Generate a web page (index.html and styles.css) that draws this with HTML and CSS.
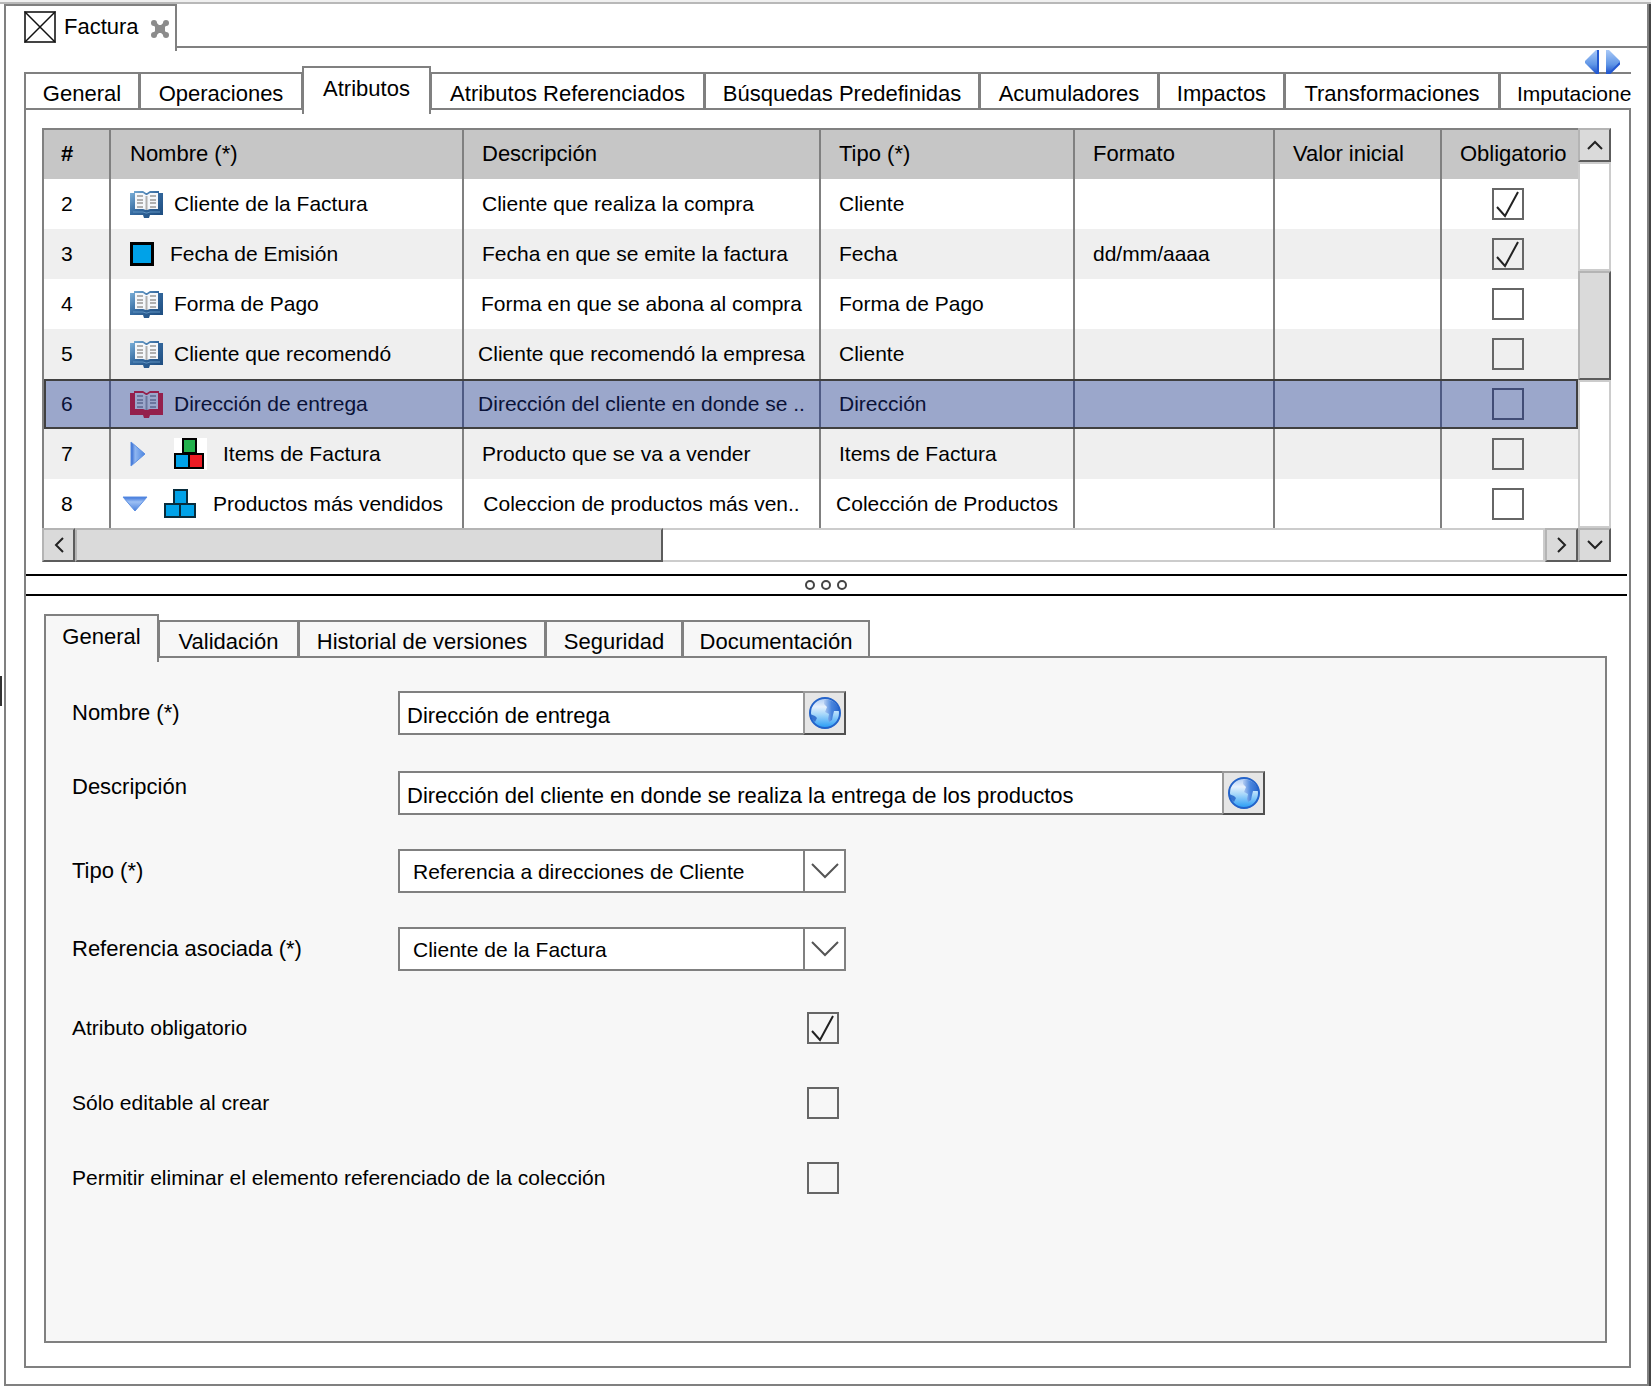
FILE: index.html
```html
<!DOCTYPE html>
<html lang="es">
<head>
<meta charset="utf-8">
<meta name="viewport" content="width=device-width, initial-scale=1">
<title>Factura</title>
<link rel="stylesheet" href="styles.css">
</head>
<body>
<svg class="defs" aria-hidden="true">
  <defs>
    <linearGradient id="g-cover" x1="0" y1="0" x2="1" y2="1">
      <stop offset="0" stop-color="#7fb4dc"/><stop offset=".45" stop-color="#34699f"/><stop offset="1" stop-color="#1c4a7c"/>
    </linearGradient>
    <linearGradient id="g-arrow" x1="0" y1="0" x2="1" y2="0">
      <stop offset="0" stop-color="#2a62cf"/><stop offset=".3" stop-color="#8fb6f0"/><stop offset="1" stop-color="#4a84e0"/>
    </linearGradient>
    <linearGradient id="g-down" x1="0" y1="0" x2="0" y2="1">
      <stop offset="0" stop-color="#3a72da"/><stop offset=".35" stop-color="#9dc0f4"/><stop offset="1" stop-color="#4a80dc"/>
    </linearGradient>
    <linearGradient id="g-nav" x1="0" y1="0" x2="0" y2="1">
      <stop offset="0" stop-color="#a9c9f7"/><stop offset=".6" stop-color="#6096e6"/><stop offset="1" stop-color="#1a4fcb"/>
    </linearGradient>
    <linearGradient id="g-sea" x1="0" y1="0" x2="1" y2="0">
      <stop offset="0" stop-color="#b4cdf2"/><stop offset=".5" stop-color="#4a86de"/><stop offset="1" stop-color="#2a68cc"/>
    </linearGradient>
    <linearGradient id="g-land" x1="0" y1="0" x2="0" y2="1">
      <stop offset="0" stop-color="#a9c8f3"/><stop offset=".3" stop-color="#e6f1fd"/><stop offset=".55" stop-color="#a4d6fa"/><stop offset="1" stop-color="#1f98f4"/>
    </linearGradient>
  </defs>
  <symbol id="book" viewBox="0 0 33 28">
    <path class="cover" d="M0 3h4V1h9l3 2h1l3-2h9v2h4v22H20l-1 3h-5l-1-3H0z"/>
    <path class="page" d="M5 3h8l3 2h1l3-2h8v16h-8l-3 1h-1l-3-1H5z"/>
    <path class="lines" d="M7 6h6M7 10h6M7 13h6M7 17h6M20 6h6M20 10h6M20 13h6M20 17h6"/>
    <path class="spine" d="M16.500 6v14"/>
    <path class="edge" d="M3 22h10l3 1h1l3-1h10"/>
  </symbol>
  <symbol id="globe" viewBox="0 0 32 32">
    <circle cx="16" cy="16" r="15.500" fill="url(#g-land)"/>
    <path d="M15 3Q24 1 30 11v3h-5l-1 4-1 5-3 2-1-3 1-5-4-2 2-5-3-3z" fill="url(#g-sea)"/>
    <path d="M1 17l5 2 2 2-2 4Q2 22 1 17z" fill="#3673cf"/>
    <circle cx="16" cy="16" r="15" fill="none" stroke="#2463c9" stroke-width="2"/>
  </symbol>
</svg>

<div class="strip"></div>
<span class="grip" aria-hidden="true"></span>
<main class="window">
  <header class="docs">
    <div class="doc">
      <svg width="32" height="32" viewBox="0 0 32 32" aria-hidden="true"><rect x="1" y="1" width="30" height="30" fill="none" stroke="#444" stroke-width="2"/><path d="M1 1l30 30M31 1L1 31" stroke="#111" stroke-width="1.500"/></svg>
      <h1>Factura</h1>
      <button class="close" aria-label="Cerrar"><svg width="18" height="18" viewBox="0 0 18 18"><path d="M3 3l12 12M15 3L3 15" stroke="#8c8c8c" stroke-width="4"/><g fill="#8c8c8c"><rect x="4" y="5" width="10" height="8"/><circle cx="3" cy="3" r="3"/><circle cx="15" cy="3" r="3"/><circle cx="3" cy="15" r="3"/><circle cx="15" cy="15" r="3"/></g></svg></button>
    </div>
    <div class="docs-line"></div>
  </header>

  <section class="content">
    <div class="nav">
      <button aria-label="Anterior"><svg width="15" height="24" viewBox="0 0 15 24"><path d="M14 0v24h-3L0 13v-2L11 0z" fill="url(#g-nav)"/><path d="M13 0v24" stroke="#2459d0" stroke-width="2"/></svg></button>
      <button aria-label="Siguiente"><svg width="15" height="24" viewBox="0 0 15 24"><path d="M1 0v24h3l11-11v-2L4 0z" fill="url(#g-nav)"/><path d="M1 24h3l11-11" fill="none" stroke="#2459d0" stroke-width="2"/></svg></button>
    </div>
    <nav class="tabs tabs-main">
      <button class="tab">General</button><button class="tab">Operaciones</button><button class="tab active">Atributos</button><button class="tab">Atributos Referenciados</button><button class="tab">Búsquedas Predefinidas</button><button class="tab">Acumuladores</button><button class="tab">Impactos</button><button class="tab">Transformaciones</button><button class="tab cut">Imputacione</button>
    </nav>

    <div class="panel">
      <div class="sheet">
        <table>
          <colgroup><col class="c-num"><col class="c-name"><col class="c-desc"><col class="c-type"><col class="c-format"><col class="c-value"><col></colgroup>
          <thead><tr><th class="num">#</th><th>Nombre (*)</th><th>Descripción</th><th>Tipo (*)</th><th>Formato</th><th>Valor inicial</th><th>Obligatorio</th></tr></thead>
          <tbody>
            <tr><td>2</td><td><div class="name"><svg class="book" width="33" height="28"><use href="#book"/></svg>Cliente de la Factura</div></td><td>Cliente que realiza la compra</td><td>Cliente</td><td></td><td></td><td class="tick"><input type="checkbox" checked aria-label="Obligatorio 2"></td></tr>
            <tr><td>3</td><td><div class="name wide"><svg width="24" height="24" viewBox="0 0 24 24"><rect x="1.500" y="1.500" width="21" height="21" fill="#00a2e8" stroke="#000" stroke-width="3"/></svg>Fecha de Emisión</div></td><td>Fecha en que se emite la factura</td><td>Fecha</td><td>dd/mm/aaaa</td><td></td><td class="tick"><input type="checkbox" checked aria-label="Obligatorio 3"></td></tr>
            <tr><td>4</td><td><div class="name"><svg class="book" width="33" height="28"><use href="#book"/></svg>Forma de Pago</div></td><td class="full">Forma en que se abona al compra</td><td>Forma de Pago</td><td></td><td></td><td class="tick"><input type="checkbox" aria-label="Obligatorio 4"></td></tr>
            <tr><td>5</td><td><div class="name"><svg class="book" width="33" height="28"><use href="#book"/></svg>Cliente que recomendó</div></td><td class="full">Cliente que recomendó la empresa</td><td>Cliente</td><td></td><td></td><td class="tick"><input type="checkbox" aria-label="Obligatorio 5"></td></tr>
            <tr class="selected"><td>6</td><td><div class="name"><svg class="book" width="33" height="28"><use href="#book"/></svg>Dirección de entrega</div></td><td class="full">Dirección del cliente en donde se ..</td><td>Dirección</td><td></td><td></td><td class="tick"><input type="checkbox" aria-label="Obligatorio 6"></td></tr>
            <tr><td>7</td><td><div class="name"><svg class="twist" width="16" height="26" viewBox="0 0 16 26"><path d="M1 1l14 12L1 25z" fill="url(#g-arrow)" stroke="#5c8fe2"/></svg><svg width="33" height="32" viewBox="0 0 33 32"><rect width="33" height="32" fill="#fff"/><g stroke="#000" stroke-width="2"><rect x="9" y="1" width="13" height="14" fill="#22b14c"/><rect x="1" y="16" width="14" height="14" fill="#00a2e8"/><rect x="15" y="16" width="14" height="14" fill="#ed1c24"/></g></svg><span class="leaf">Items de Factura</span></div></td><td>Producto que se va a vender</td><td>Items de Factura</td><td></td><td></td><td class="tick"><input type="checkbox" aria-label="Obligatorio 7"></td></tr>
            <tr><td>8</td><td class="open"><div class="name wide"><svg width="26" height="16" viewBox="0 0 26 16"><path d="M1 1h24L13 15z" fill="url(#g-down)" stroke="#5c8fe2"/></svg><svg width="33" height="30" viewBox="0 0 33 30"><g fill="#00a2e8" stroke="#082c3c" stroke-width="2"><rect x="10" y="1" width="13" height="14"/><rect x="1" y="15" width="15" height="13"/><rect x="16" y="15" width="15" height="13"/></g></svg>Productos más vendidos</div></td><td class="full">Coleccion de productos más ven..</td><td class="full">Colección de Productos</td><td></td><td></td><td class="tick"><input type="checkbox" aria-label="Obligatorio 8"></td></tr>
          </tbody>
        </table>
        <div class="bar vbar">
          <button aria-label="Subir"><svg width="16" height="10" viewBox="0 0 16 10"><path d="M1 9l7-7 7 7"/></svg></button>
          <i class="track before"></i><i class="thumb"></i><i class="track after"></i>
        </div>
        <div class="bar hbar">
          <button aria-label="Izquierda"><svg width="10" height="16" viewBox="0 0 10 16"><path d="M9 1L2 8l7 7"/></svg></button>
          <i class="thumb"></i><i class="track"></i>
          <button aria-label="Derecha"><svg width="10" height="16" viewBox="0 0 10 16"><path d="M1 1l7 7-7 7"/></svg></button>
        </div>
        <div class="bar corner"><button aria-label="Bajar"><svg width="16" height="10" viewBox="0 0 16 10"><path d="M1 1l7 7 7-7"/></svg></button></div>
      </div>

      <div class="splitter"><svg width="44" height="12" viewBox="0 0 44 12" fill="none" stroke="#444" stroke-width="2"><circle cx="5" cy="6" r="4"/><circle cx="21" cy="6" r="4"/><circle cx="37" cy="6" r="4"/></svg></div>

      <div class="details">
        <nav class="tabs tabs-sub">
          <button class="tab active">General</button><button class="tab">Validación</button><button class="tab">Historial de versiones</button><button class="tab">Seguridad</button><button class="tab">Documentación</button><div class="tabs-line"></div>
        </nav>
        <form class="form">
          <div class="field"><label for="nombre">Nombre (*)</label><div class="box"><input class="text" id="nombre" type="text" value="Dirección de entrega"><button class="lang" type="button" aria-label="Traducir nombre"><svg width="32" height="32"><use href="#globe"/></svg></button></div></div>
          <div class="field second"><label for="desc">Descripción</label><div class="box long"><input class="text" id="desc" type="text" value="Dirección del cliente en donde se realiza la entrega de los productos"><button class="lang" type="button" aria-label="Traducir descripción"><svg width="32" height="32"><use href="#globe"/></svg></button></div></div>
          <div class="field"><label for="tipo">Tipo (*)</label><div class="box pick"><select id="tipo"><option>Referencia a direcciones de Cliente</option></select><span class="drop"><svg width="28" height="16" viewBox="0 0 28 16"><path d="M1 1l13 13L27 1"/></svg></span></div></div>
          <div class="field"><label for="ref">Referencia asociada (*)</label><div class="box pick"><select id="ref"><option>Cliente de la Factura</option></select><span class="drop"><svg width="28" height="16" viewBox="0 0 28 16"><path d="M1 1l13 13L27 1"/></svg></span></div></div>
          <div class="flags">
            <label for="f1">Atributo obligatorio</label><input id="f1" type="checkbox" checked>
            <label for="f2">Sólo editable al crear</label><input id="f2" type="checkbox">
            <label for="f3">Permitir eliminar el elemento referenciado de la colección</label><input id="f3" type="checkbox">
          </div>
        </form>
      </div>
    </div>
  </section>
</main>
</body>
</html>
```
FILE: styles.css
```css
:root {
  --line: #808080;
  --soft: #f7f7f7;
  --face: #dadada;
}

* { box-sizing: border-box; }

body {
  margin: 0;
  min-height: 100vh;
  display: flex;
  flex-direction: column;
  background: #fff;
  color: #000;
  font: 22px/28px "Liberation Sans", Arial, sans-serif;
}

button, input, select { font: inherit; color: inherit; margin: 0; }
button { padding: 0; border: 0; background: none; }
svg { display: block; flex: none; }
.defs { position: absolute; width: 0; height: 0; }

.strip { height: 4px; background: #f0f0f0; border-bottom: 2px solid #b8b8b8; }

.grip { position: absolute; left: 0; top: 676px; width: 2px; height: 30px; background: #333; }

.window {
  flex: 1;
  display: flex;
  flex-direction: column;
  margin: 0 2px 0 4px;
  border: solid var(--line);
  border-width: 0 2px 2px;
  box-shadow: 2px 0 0 #444;
}

/* Document tab */
.docs { display: flex; height: 44px; align-items: flex-start; }
.doc {
  display: flex;
  align-items: center;
  gap: 8px;
  width: 171px;
  height: 47px;
  padding: 0 6px 4px 18px;
  border: solid var(--line);
  border-width: 2px 2px 0 0;
}
.doc h1 { margin: 0; font-size: 22px; font-weight: 400; line-height: 28px; flex: 1; }
.close { padding-top: 4px; }
.docs-line { flex: 1; height: 44px; border-bottom: 2px solid var(--line); }

/* Tab rows */
.content { position: relative; flex: 1; display: flex; flex-direction: column; padding: 18px 16px 16px 18px; }
.nav { position: absolute; right: 27px; top: 2px; display: flex; gap: 5px; z-index: 2; }
.tabs { display: grid; height: 44px; align-items: end; }
.tabs-main { grid-template-columns: 116px 163px 128px 274px 275px 179px 126px 215px minmax(0, 1fr); }
.tabs-sub { grid-template-columns: 115px 140px 247px 137px 187px minmax(0, 1fr); }
.tab {
  height: 38px;
  margin-left: -1px;
  padding: 6px 0 0;
  border: 2px solid var(--line);
  background: inherit;
  white-space: nowrap;
}
.tab:first-child { margin-left: 0; }
.tab.active {
  position: relative;
  z-index: 1;
  height: 48px;
  margin-bottom: -4px;
  padding: 0 0 4px;
  border-bottom: 0;
  background: #fff;
}
.tab.cut { border-right: 0; padding-left: 16px; font-size: 21px; text-align: left; }
.tabs-line { height: 2px; background: var(--line); }

.panel {
  flex: 1;
  display: flex;
  flex-direction: column;
  padding-top: 18px;
  border: solid var(--line);
  border-width: 0 2px 2px;
}

/* Attribute table with its scroll bars */
.sheet { display: grid; grid-template-columns: minmax(0, 1fr) 33px; margin: 0 18px 0 16px; }
table {
  width: 100%;
  table-layout: fixed;
  border-collapse: separate;
  border-spacing: 0;
  border: solid var(--line);
  border-width: 2px 0 0 2px;
}
.c-num { width: 67px; }
.c-name { width: 353px; }
.c-desc { width: 357px; }
.c-type { width: 254px; }
.c-format { width: 200px; }
.c-value { width: 167px; }
th, td {
  height: 50px;
  padding: 0 0 0 18px;
  border-right: 2px solid var(--line);
  text-align: left;
  font-weight: 400;
  white-space: nowrap;
}
td:first-child, th:first-child { padding-left: 17px; }
td:nth-child(2), th:nth-child(2) { padding-left: 19px; }
tbody { font-size: 21px; }
th { height: 49px; padding-bottom: 2px; background: #c6c6c6; }
tr:last-child td { height: 49px; }
th.num { font-weight: 700; }
th:last-child, td:last-child { border-right: 0; }
tbody tr:nth-child(even) { background: #efefef; }
td.full { padding: 0; text-align: center; }
td.tick { padding: 0 4px 0 0; text-align: center; }
td.open:nth-child(2) { padding-left: 11px; }
.name { display: flex; align-items: center; gap: 11px; }
.name.wide { gap: 16px; }
.twist { margin-right: 17px; }
.leaf { padding-left: 5px; }

tbody tr.selected { background: #9ba7cb; color: #0a1238; outline: 2px solid #404040; outline-offset: -2px; }
.selected td { border-color: #4f5b84; }

/* Book icon: blue by default, crimson in the selected row */
.cover { fill: var(--cover, url(#g-cover)); }
.page { fill: var(--page, #f4f7fb); }
.lines, .spine { stroke: var(--ink, #b0b0b0); stroke-width: 2; }
.edge { fill: none; stroke: var(--edge, #5f92c0); stroke-width: 1; }
.selected .book { --cover: #94204c; --page: #9ba7cb; --ink: #6b769e; --edge: #94204c; }

input[type="checkbox"] {
  appearance: none;
  display: inline-block;
  vertical-align: middle;
  width: 32px;
  height: 32px;
  border: 2px solid #666;
}
input[type="checkbox"]:checked {
  background: url("data:image/svg+xml,%3Csvg xmlns='http://www.w3.org/2000/svg' viewBox='0 0 28 28'%3E%3Cpath d='M3 17l8 9L24 2' fill='none' stroke='%23222' stroke-width='2'/%3E%3C/svg%3E") center / 28px 28px no-repeat;
}
.selected input[type="checkbox"] { border-color: #414c75; }

.bar { display: flex; }
.bar button {
  display: grid;
  place-items: center;
  flex: none;
  width: 33px;
  height: 34px;
  background: var(--face);
  border: 2px solid;
  border-color: #b4b4b4 #5c5c5c #5c5c5c #b4b4b4;
}
.bar path { fill: none; stroke: #222; stroke-width: 2; }
.thumb { background: var(--face); border: 2px solid; border-color: #b4b4b4 #5c5c5c #5c5c5c #b4b4b4; }
.track { border: 2px solid #ccc; }
.vbar { flex-direction: column; }
.vbar .before { flex: 108; }
.vbar .thumb { flex: 108; }
.vbar .after { flex: 149; }
.hbar .thumb { flex: 586; }
.hbar .track { flex: 884; border-left: 0; }

.splitter {
  display: grid;
  place-items: center;
  height: 22px;
  margin: 12px 2px 0 0;
  border: solid #000;
  border-width: 2px 0;
}

/* Attribute details */
.details { flex: 1; display: flex; flex-direction: column; margin: 18px 22px 23px 18px; }
.tabs-sub .tab { background: var(--soft); }
.form {
  flex: 1;
  padding: 33px 0 60px 26px;
  border: solid var(--line);
  border-width: 0 2px 2px;
  background: var(--soft);
}
.field { display: grid; grid-template-columns: 326px minmax(0, 1fr); margin-bottom: 34px; }
.field label { align-self: center; }
.field.second { margin-top: 36px; }
.field.second label { align-self: start; padding-top: 2px; }
.box { display: flex; width: 448px; height: 44px; }
.box.long { width: 867px; }
.text {
  flex: 1;
  min-width: 0;
  padding: 5px 0 0 7px;
  border: 2px solid var(--line);
  border-right: 0;
  background: #fff;
}
.lang {
  display: grid;
  place-items: center;
  width: 43px;
  background: #e6e6e6;
  border: 2px solid;
  border-color: #999 #505050 #505050 #999;
}
.pick { position: relative; }
.pick select {
  appearance: none;
  width: 100%;
  padding: 2px 48px 0 13px;
  border: 2px solid var(--line);
  border-radius: 0;
  background: #fff;
  font-size: 21px;
}
.drop {
  position: absolute;
  right: 0;
  top: 0;
  display: grid;
  place-items: center;
  width: 43px;
  height: 44px;
  padding-right: 2px;
  border-left: 2px solid var(--line);
  pointer-events: none;
}
.drop path { fill: none; stroke: #555; stroke-width: 2; }
.flags {
  display: grid;
  grid-template-columns: 735px auto;
  justify-content: start;
  align-items: center;
  row-gap: 43px;
  margin-top: 41px;
  font-size: 21px;
}
```
